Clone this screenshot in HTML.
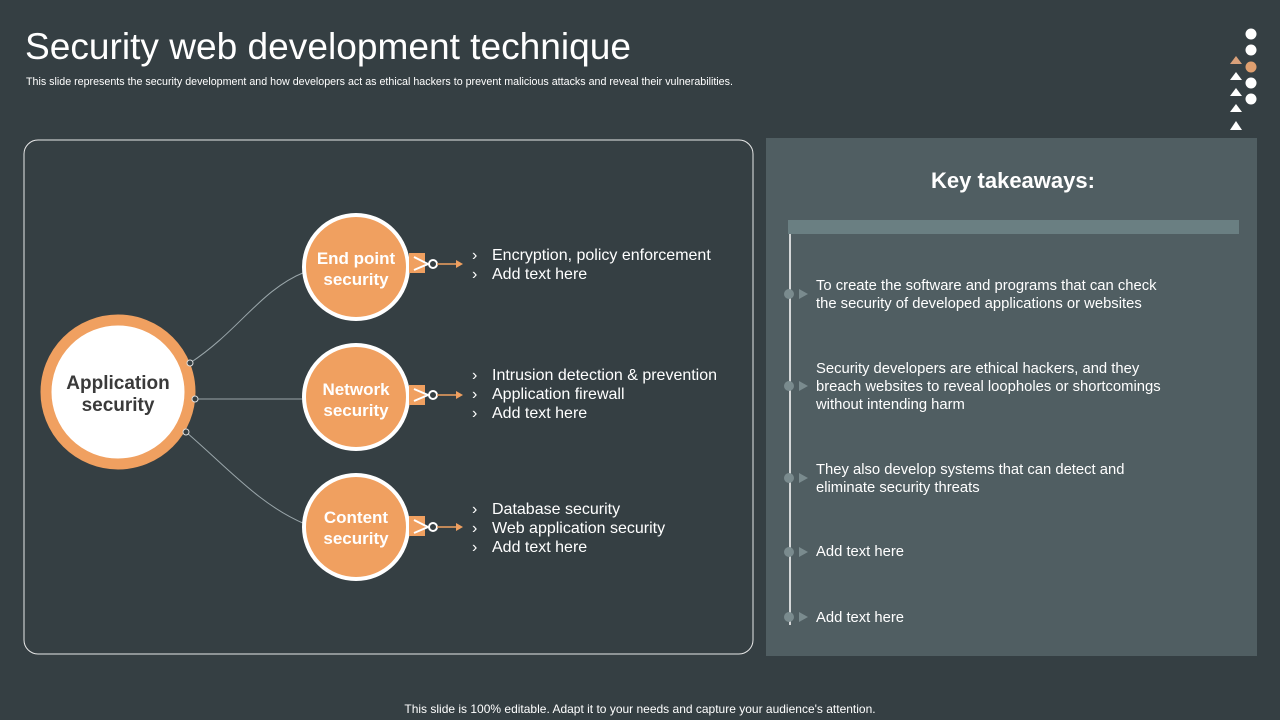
<!DOCTYPE html>
<html><head><meta charset="utf-8"><style>
body{margin:0;width:1280px;height:720px;background:#353f43;font-family:"Liberation Sans",sans-serif;color:#fff;position:relative;overflow:hidden}
.a{position:absolute}
.t{left:25px;top:25px;font-size:37.1px;white-space:nowrap}
.s{left:26px;top:76px;font-size:10.7px;white-space:nowrap}
.li{font-size:16px;line-height:19px;white-space:nowrap}
.li span{display:inline-block;width:20px}
.k{font-size:14.8px;line-height:18px;left:816px}
</style></head><body>
<div class="a t">Security web development technique</div>
<div class="a s">This slide represents the security development and how developers act as ethical hackers to prevent malicious attacks and reveal their vulnerabilities.</div>
<svg class="a" style="left:0;top:0" width="1280" height="720">
<circle cx="1251" cy="34" r="5.5" fill="#fff"/><circle cx="1251" cy="50" r="5.5" fill="#fff"/><circle cx="1251" cy="67" r="5.5" fill="#e0a070"/><circle cx="1251" cy="83" r="5.5" fill="#fff"/><circle cx="1251" cy="99" r="5.5" fill="#fff"/>
<polygon points="1236,56 1242,64 1230,64" fill="#d9a07a"/>
<polygon points="1236,72 1242,80 1230,80" fill="#fff"/><polygon points="1236,88 1242,96 1230,96" fill="#fff"/><polygon points="1236,104 1242,112 1230,112" fill="#fff"/><polygon points="1236,121 1242,130 1230,130" fill="#fff"/>
<rect x="24" y="140" width="729" height="514" rx="14" fill="none" stroke="#e8e8e8" stroke-width="1"/>
<path d="M190,363 C240,330 260,290 305,272" stroke="#9aa6aa" fill="none"/>
<path d="M195,399 L305,399" stroke="#9aa6aa" fill="none"/>
<path d="M186,432 C230,470 260,505 305,524" stroke="#9aa6aa" fill="none"/>
<circle cx="118" cy="392" r="72" fill="#fff" stroke="#f0a060" stroke-width="11"/>
<circle cx="190" cy="363" r="3" fill="#353f43" stroke="#ddd"/><circle cx="195" cy="399" r="3" fill="#353f43" stroke="#ddd"/><circle cx="186" cy="432" r="3" fill="#353f43" stroke="#ddd"/>
<text x="118" y="389" font-size="19" font-weight="bold" fill="#3a3a3a" text-anchor="middle">Application</text>
<text x="118" y="411" font-size="19" font-weight="bold" fill="#3a3a3a" text-anchor="middle">security</text>
<g font-size="17" font-weight="bold" fill="#fff" text-anchor="middle">
<g><circle cx="356" cy="267" r="52" fill="#f0a060" stroke="#fff" stroke-width="4"/><text x="356" y="264">End point</text><text x="356" y="285">security</text>
<rect x="409" y="253" width="16" height="20" fill="#f0a060"/><path d="M414,257 L428,264 L414,270" stroke="#fff" stroke-width="2" fill="none"/><circle cx="433" cy="264" r="4" fill="#353f43" stroke="#fff" stroke-width="2"/><path d="M437,264 L456,264" stroke="#f0a060" stroke-width="1.5"/><polygon points="456,260 463,264 456,268" fill="#f0a060"/></g>
<g transform="translate(0,130)"><circle cx="356" cy="267" r="52" fill="#f0a060" stroke="#fff" stroke-width="4"/><text x="356" y="265">Network</text><text x="356" y="286">security</text>
<rect x="409" y="255" width="16" height="20" fill="#f0a060"/><path d="M414,259 L428,265 L414,271" stroke="#fff" stroke-width="2" fill="none"/><circle cx="433" cy="265" r="4" fill="#353f43" stroke="#fff" stroke-width="2"/><path d="M437,265 L456,265" stroke="#f0a060" stroke-width="1.5"/><polygon points="456,261 463,265 456,269" fill="#f0a060"/></g>
<g transform="translate(0,260)"><circle cx="356" cy="267" r="52" fill="#f0a060" stroke="#fff" stroke-width="4"/><text x="356" y="263">Content</text><text x="356" y="284">security</text>
<rect x="409" y="256" width="16" height="20" fill="#f0a060"/><path d="M414,260 L428,267 L414,273" stroke="#fff" stroke-width="2" fill="none"/><circle cx="433" cy="267" r="4" fill="#353f43" stroke="#fff" stroke-width="2"/><path d="M437,267 L456,267" stroke="#f0a060" stroke-width="1.5"/><polygon points="456,263 463,267 456,271" fill="#f0a060"/></g>
</g>
<rect x="766" y="138" width="491" height="518" fill="#505e62"/>
<rect x="788" y="220" width="451" height="14" fill="#6a7f82"/>
<line x1="790" y1="234" x2="790" y2="625" stroke="#fff" stroke-width="1.5"/>
<g fill="#7a8b8e"><circle cx="789" cy="294" r="5"/><polygon points="799,289 808,294 799,299"/>
<circle cx="789" cy="386" r="5"/><polygon points="799,381 808,386 799,391"/>
<circle cx="789" cy="478" r="5"/><polygon points="799,473 808,478 799,483"/>
<circle cx="789" cy="552" r="5"/><polygon points="799,547 808,552 799,557"/>
<circle cx="789" cy="617" r="5"/><polygon points="799,612 808,617 799,622"/></g>
<text x="1013" y="188" font-size="22" font-weight="bold" fill="#fff" text-anchor="middle">Key takeaways:</text>
</svg>
<div class="a li" style="left:472px;top:246px"><span>›</span>Encryption, policy enforcement<br><span>›</span>Add text here</div>
<div class="a li" style="left:472px;top:366px"><span>›</span>Intrusion detection &amp; prevention<br><span>›</span>Application firewall<br><span>›</span>Add text here</div>
<div class="a li" style="left:472px;top:500px"><span>›</span>Database security<br><span>›</span>Web application security<br><span>›</span>Add text here</div>
<div class="a k" style="top:277px">To create the software and programs that can check<br>the security of developed applications or websites</div>
<div class="a k" style="top:360px">Security developers are ethical hackers, and they<br>breach websites to reveal loopholes or shortcomings<br>without intending harm</div>
<div class="a k" style="top:461px">They also develop systems that can detect and<br>eliminate security threats</div>
<div class="a k" style="top:543px">Add text here</div>
<div class="a k" style="top:609px">Add text here</div>
<div class="a" style="left:0;width:1280px;text-align:center;top:702px;font-size:12px">This slide is 100% editable. Adapt it to your needs and capture your audience's attention.</div>
</body></html>
